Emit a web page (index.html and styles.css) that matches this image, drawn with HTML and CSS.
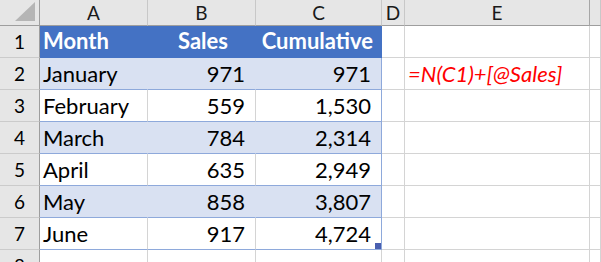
FILE: index.html
```html
<!DOCTYPE html>
<html lang="en">
<head>
    <meta charset="UTF-8">
    <title>Cumulative Sales</title>
    <link rel="stylesheet" href="styles.css">
</head>
<body>
    <div class="sheet">
        <!-- column headers -->
        <div class="hdr corner"><div class="tri"></div></div>
        <div class="hdr">A</div>
        <div class="hdr">B</div>
        <div class="hdr">C</div>
        <div class="hdr">D</div>
        <div class="hdr hdr-e">E</div>
        <div class="hdr"></div>

        <!-- row 1: table header -->
        <div class="rh">1</div>
        <div class="cell th">Month</div>
        <div class="cell th num sales">Sales</div>
        <div class="cell th num edge">Cumulative</div>
        <div class="cell"></div>
        <div class="cell"></div>
        <div class="cell"></div>

        <div class="rh">2</div>
        <div class="cell band">January</div>
        <div class="cell band num">971</div>
        <div class="cell band num edge">971</div>
        <div class="cell"></div>
        <div class="cell formula">=N(C1)+[@Sales]</div>
        <div class="cell"></div>

        <div class="rh">3</div>
        <div class="cell plain">February</div>
        <div class="cell plain num">559</div>
        <div class="cell plain num edge">1,530</div>
        <div class="cell"></div>
        <div class="cell"></div>
        <div class="cell"></div>

        <div class="rh">4</div>
        <div class="cell band">March</div>
        <div class="cell band num">784</div>
        <div class="cell band num edge">2,314</div>
        <div class="cell"></div>
        <div class="cell"></div>
        <div class="cell"></div>

        <div class="rh">5</div>
        <div class="cell plain">April</div>
        <div class="cell plain num">635</div>
        <div class="cell plain num edge">2,949</div>
        <div class="cell"></div>
        <div class="cell"></div>
        <div class="cell"></div>

        <div class="rh">6</div>
        <div class="cell band">May</div>
        <div class="cell band num">858</div>
        <div class="cell band num edge">3,807</div>
        <div class="cell"></div>
        <div class="cell"></div>
        <div class="cell"></div>

        <div class="rh">7</div>
        <div class="cell plain">June</div>
        <div class="cell plain num">917</div>
        <div class="cell plain num edge last">4,724<span class="handle"></span></div>
        <div class="cell"></div>
        <div class="cell"></div>
        <div class="cell"></div>

        <div class="rh">8</div>
        <div class="cell"></div>
        <div class="cell"></div>
        <div class="cell"></div>
        <div class="cell"></div>
        <div class="cell"></div>
        <div class="cell"></div>
    </div>
</body>
</html>
```

FILE: styles.css
```css
* {
    box-sizing: border-box;
}
body {
    margin: 0;
    background: #ffffff;
    font-family: Lato, "Noto Sans", sans-serif;
    font-size: 22px;
    color: #000000;
    overflow: hidden;
}
.sheet {
    display: grid;
    grid-template-columns: 40px 108px 108px 126px 23px 185px 1fr;
    grid-template-rows: 26px repeat(8, 32px);
    height: 262px;
    overflow: hidden;
}
.hdr {
    background: #e6e6e6;
    border-right: 1px solid #c8c8c8;
    border-bottom: 1px solid #9e9e9e;
    display: flex;
    justify-content: center;
    align-items: flex-end;
    line-height: 24px;
    font-size: 19px;
    color: #1a1a1a;
}
.hdr-e {
    border-right-color: #a6a6a6;
}
.corner {
    border-right-color: #9e9e9e;
    justify-content: flex-end;
    padding: 0 4px 4px 0;
}
.tri {
    width: 20px;
    height: 19px;
    background: #b5b5b5;
    clip-path: polygon(100% 0, 100% 100%, 0 100%);
}
.rh {
    background: #e6e6e6;
    border-right: 1px solid #9e9e9e;
    border-bottom: 1px solid #cbcbcb;
    display: flex;
    justify-content: center;
    align-items: flex-end;
    line-height: 24px;
    font-size: 19px;
    padding-bottom: 3px;
}
.cell {
    border-right: 1px solid #d4d4d4;
    border-bottom: 1px solid #d4d4d4;
    display: flex;
    align-items: flex-end;
    line-height: 26px;
    padding: 0 4px 2px 3px;
    white-space: nowrap;
    overflow: hidden;
}
.num {
    justify-content: flex-end;
    padding-right: 10px;
}
.th {
    background: #4472c4;
    color: #ffffff;
    font-weight: bold;
    border-right-color: #4472c4;
    border-bottom-color: #4472c4;
    padding-bottom: 3px;
}
.th.sales {
    padding-right: 27px;
}
.th.edge {
    padding-right: 8px;
}
.band {
    background: #d9e1f2;
    border-right-color: #d9e1f2;
    border-bottom-color: #8ea9db;
}
.plain {
    border-bottom-color: #8ea9db;
}
.band.edge,
.plain.edge {
    border-right-color: #8ea9db;
}
.formula {
    color: #ff0000;
    font-style: italic;
    overflow: visible;
    padding-left: 3px;
}
.last {
    position: relative;
}
.handle {
    position: absolute;
    right: 0;
    bottom: 0;
    width: 6px;
    height: 6px;
    background: #4a5fb0;
}
```
